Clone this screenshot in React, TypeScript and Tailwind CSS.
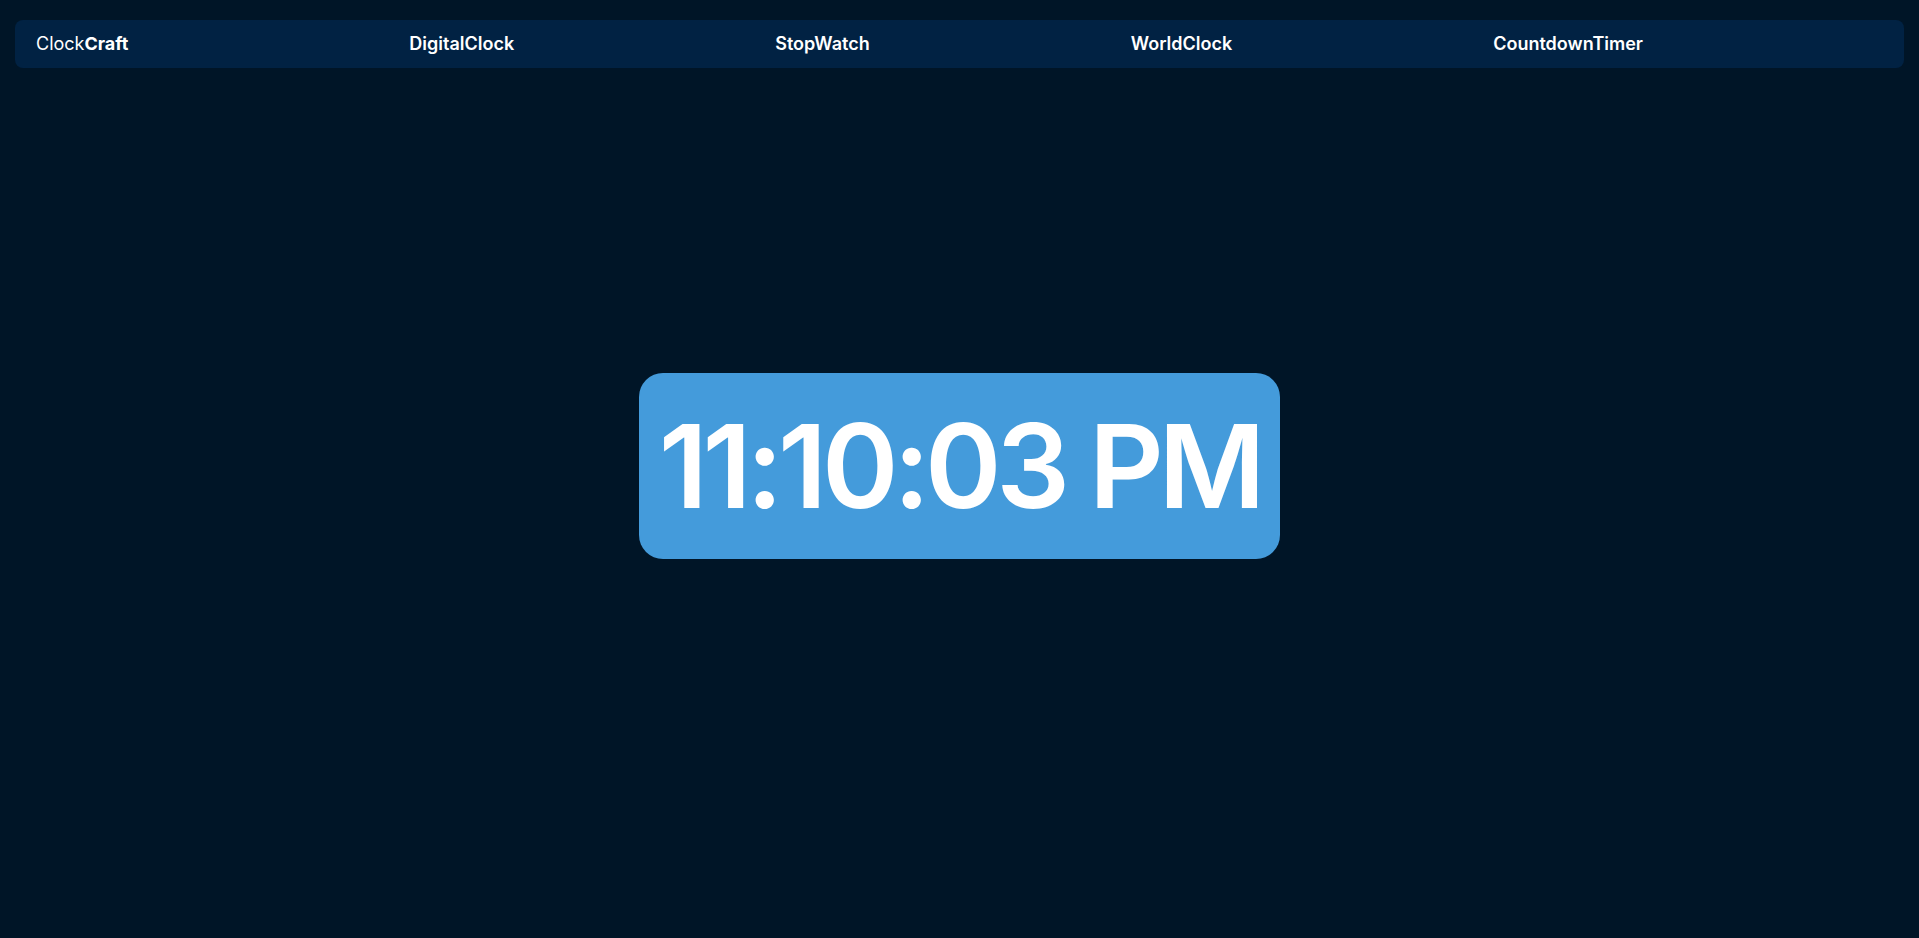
import React, { useState } from 'react';

const LINKS = ['DigitalClock', 'StopWatch', 'WorldClock', 'CountdownTimer'];

export default function App() {
  // fixed time to match the screenshot
  const [time] = useState('11:10:03 PM');

  return (
    <div className="min-h-screen bg-[#001527] text-white font-['Inter',sans-serif] flex flex-col">
      {/* Navbar */}
      <nav className="mx-[15px] mt-5 flex items-center rounded-lg bg-[#012243] pl-[21px] py-3">
        <div className="text-lg leading-6">
          Clock<span className="font-bold">Craft</span>
        </div>
        <ul className="ml-5 flex flex-1 justify-evenly">
          {LINKS.map((l) => (
            <li key={l} className="text-lg leading-6 font-semibold cursor-pointer">
              {l}
            </li>
          ))}
        </ul>
      </nav>

      {/* Clock */}
      <main className="flex flex-1 justify-center pt-[305px]">
        <div className="h-fit rounded-3xl bg-[#449bdb] px-5 py-[35px]">
          <span className="block text-[116px] leading-none font-semibold tracking-[-0.045em]">{time}</span>
        </div>
      </main>
    </div>
  );
}
